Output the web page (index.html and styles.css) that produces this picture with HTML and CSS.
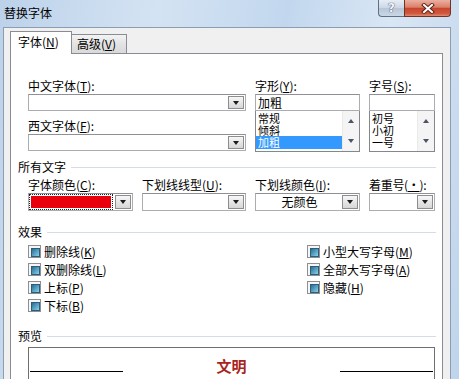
FILE: index.html
```html
<!DOCTYPE html>
<html lang="zh-CN">
<head>
    <meta charset="UTF-8">
    <meta name="viewport" content="width=device-width, initial-scale=1.0">
    <title>替换字体</title>
    <link rel="stylesheet" href="styles.css">
</head>
<body>
<div class="window">
    <!-- 标题栏 -->
    <div class="titlebar">
        <div class="title">替换字体</div>
        <div class="caption">
            <div class="cap-btn help">?</div>
            <div class="cap-btn close">
                <svg width="14" height="11" viewBox="0 0 14 11">
                    <path d="M3 2 L11 9 M11 2 L3 9" stroke="#5b2418" stroke-width="4" stroke-linecap="square"/>
                    <path d="M3 2 L11 9 M11 2 L3 9" stroke="#ffffff" stroke-width="2" stroke-linecap="square"/>
                </svg>
            </div>
        </div>
    </div>

    <div class="client">
        <div class="tabs">
            <div class="tab active">字体(<u>N</u>)</div>
            <div class="tab">高级(<u>V</u>)</div>
        </div>

        <div class="panel">
            <!-- 字体 / 字形 / 字号 -->
            <div class="font-grid">
                <div class="col">
                    <div class="field-label">中文字体(<u>T</u>):</div>
                    <div class="combo"><span class="combo-text"></span><span class="drop"></span></div>
                    <div class="field-label second">西文字体(<u>F</u>):</div>
                    <div class="combo"><span class="combo-text"></span><span class="drop"></span></div>
                </div>
                <div class="col">
                    <div class="field-label">字形(<u>Y</u>):</div>
                    <div class="textbox">加粗</div>
                    <div class="listbox">
                        <ul class="items">
                            <li>常规</li>
                            <li>倾斜</li>
                            <li class="selected">加粗</li>
                        </ul>
                        <div class="vscroll"><span class="sbtn"><i class="arrow up"></i></span><span class="sbtn"><i class="arrow down"></i></span></div>
                    </div>
                </div>
                <div class="col">
                    <div class="field-label">字号(<u>S</u>):</div>
                    <div class="textbox"></div>
                    <div class="listbox">
                        <ul class="items">
                            <li>初号</li>
                            <li>小初</li>
                            <li>一号</li>
                        </ul>
                        <div class="vscroll"><span class="sbtn"><i class="arrow up"></i></span><span class="sbtn"><i class="arrow down"></i></span></div>
                    </div>
                </div>
            </div>

            <!-- 所有文字 -->
            <div class="group">所有文字</div>
            <div class="attr-grid">
                <div class="col">
                    <div class="field-label">字体颜色(<u>C</u>):</div>
                    <div class="combo tall">
                        <span class="swatch-wrap"><span class="swatch"></span></span><span class="drop"></span>
                    </div>
                </div>
                <div class="col">
                    <div class="field-label">下划线线型(<u>U</u>):</div>
                    <div class="combo tall"><span class="combo-text"></span><span class="drop"></span></div>
                </div>
                <div class="col">
                    <div class="field-label">下划线颜色(<u>I</u>):</div>
                    <div class="combo tall"><span class="combo-text center">无颜色</span><span class="drop"></span></div>
                </div>
                <div class="col">
                    <div class="field-label clip">着重号(<u>·</u>):</div>
                    <div class="combo tall"><span class="combo-text"></span><span class="drop"></span></div>
                </div>
            </div>

            <!-- 效果 -->
            <div class="group effects-head">效果</div>
            <div class="effects">
                <div class="check-col left">
                    <div class="check"><span class="box"></span>删除线(<u>K</u>)</div>
                    <div class="check"><span class="box"></span>双删除线(<u>L</u>)</div>
                    <div class="check"><span class="box"></span>上标(<u>P</u>)</div>
                    <div class="check"><span class="box"></span>下标(<u>B</u>)</div>
                </div>
                <div class="check-col">
                    <div class="check"><span class="box"></span>小型大写字母(<u>M</u>)</div>
                    <div class="check"><span class="box"></span>全部大写字母(<u>A</u>)</div>
                    <div class="check"><span class="box"></span>隐藏(<u>H</u>)</div>
                </div>
            </div>

            <!-- 预览 -->
            <div class="group preview-head">预览</div>
            <div class="preview">
                <span class="rule"></span>
                <span class="sample">文明</span>
                <span class="rule"></span>
            </div>
        </div>
    </div>
</div>
</body>
</html>
```

FILE: styles.css
```css
/* 基本样式重置 */
* {
    margin: 0;
    padding: 0;
    box-sizing: border-box;
}

body {
    width: 459px;
    height: 379px;
    overflow: hidden;
    font-family: "Noto Sans CJK SC", sans-serif;
    font-size: 12px;
    color: #000;
    background: #c4d8ee;
}

u {
    text-decoration: underline;
    text-underline-offset: 1px;
}

/* 窗口外框 */
.window {
    height: 379px;
    display: flex;
    flex-direction: column;
    background: linear-gradient(100deg, #bcd2ea 0%, #d4e3f3 30%, #c2d7ee 55%, #d9e6f4 75%, #bfd4eb 100%);
}

/* 标题栏 */
.titlebar {
    height: 27px;
    flex: none;
    display: flex;
    justify-content: space-between;
    align-items: flex-start;
}

.title {
    padding: 4px 0 0 4px;
    line-height: 17px;
    font-size: 12px;
}

.caption {
    display: flex;
    margin-right: 8px;
}

.cap-btn {
    height: 17px;
    border: 1px solid #5f6f86;
    border-top: none;
    display: flex;
    align-items: center;
    justify-content: center;
}

.help {
    width: 26px;
    border-right: none;
    border-radius: 0 0 0 4px;
    background: linear-gradient(#e6edf5, #cdd8e5 48%, #b7c6d8 52%, #cad7e6);
    font-family: "DejaVu Sans", sans-serif;
    font-weight: bold;
    font-size: 12px;
    color: #f4f6fa;
    text-shadow: 0 0 1px #3b4a60, 0 0 1px #3b4a60;
}

.close {
    width: 47px;
    border-color: #6e3427;
    border-radius: 0 0 4px 0;
    background: linear-gradient(#eab0a2, #dc7f69 45%, #c8452d 52%, #d05a3f 85%, #e28b73);
}

/* 客户区 */
.client {
    flex: 1;
    margin: 0 8px 0 3px;
    background: #f0f0f0;
    border: 1px solid #8c9db2;
    border-bottom: none;
    padding: 3px 0 0 6px;
}

/* 选项卡 */
.tabs {
    height: 22px;
    display: flex;
    align-items: flex-end;
}

.tab {
    height: 19px;
    width: 55px;
    border: 1px solid #898c95;
    border-left: none;
    border-bottom: none;
    background: linear-gradient(#f3f3f3, #e3e3e3 50%, #d9d9d9);
    line-height: 18px;
    padding-left: 5px;
}

.tab.active {
    position: relative;
    z-index: 1;
    height: 23px;
    width: 62px;
    margin-bottom: -1px;
    border-left: 1px solid #898c95;
    background: #fff;
    line-height: 20px;
    padding-left: 7px;
}

.panel {
    width: 433px;
    height: 330px;
    background: #fff;
    border: 1px solid #898c95;
    padding: 23px 6px 0 7px;
}

/* 字段 */
.field-label {
    line-height: 17px;
    white-space: nowrap;
}

.field-label.second {
    margin-top: 6px;
}

.field-label.clip {
    overflow: hidden;
    letter-spacing: -0.3px;
}

.font-grid {
    margin-left: 10px;
    display: grid;
    grid-template-columns: 218px 105px 66px;
    column-gap: 9px;
}

.col {
    display: flex;
    flex-direction: column;
}

.combo {
    height: 17px;
    border: 1px solid #abadb3;
    border-top-color: #8e9096;
    background: #fff;
    display: flex;
}

.combo.tall {
    height: 18px;
}

.combo-text {
    flex: 1;
    line-height: 15px;
    padding-left: 2px;
}

.combo-text.center {
    text-align: center;
}

.drop {
    width: 16px;
    margin: 1px;
    border: 1px solid #8d8d8d;
    background: linear-gradient(#f7f7f7, #e6e6e6 50%, #d6d6d6);
    display: flex;
    align-items: center;
    justify-content: center;
}

.drop::after {
    content: '';
    border-left: 3px solid transparent;
    border-right: 3px solid transparent;
    border-top: 4px solid #1b1b1b;
}

.swatch-wrap {
    flex: 1;
    border: 1px dotted #222;
    padding: 1px;
    margin: 0 1px 0 0;
}

.swatch {
    display: block;
    height: 100%;
    background: #e8000c;
}

.textbox {
    height: 17px;
    border: 1px solid #abadb3;
    border-top-color: #8e9096;
    line-height: 15px;
    padding-left: 2px;
}

/* 列表框 */
.listbox {
    height: 41px;
    border: 1px solid #828790;
    border-top: none;
    display: flex;
    overflow: hidden;
}

.items {
    flex: 1;
    list-style: none;
    padding-top: 1px;
    font-size: 11px;
}

.items li {
    line-height: 12px;
    height: 12px;
    padding-left: 2px;
}

.items li.selected {
    background: #3399ff;
    color: #fff;
    height: 13px;
}

.vscroll {
    width: 17px;
    background: #f4f4f4;
    border-left: 1px solid #eaeaea;
    display: flex;
    flex-direction: column;
}

.sbtn {
    flex: 1;
    display: flex;
    align-items: center;
    justify-content: center;
}

.arrow {
    border-left: 3px solid transparent;
    border-right: 3px solid transparent;
}

.arrow.up {
    border-bottom: 4px solid #4a5468;
}

.arrow.down {
    border-top: 4px solid #4a5468;
}

/* 分组标题 */
.group {
    display: flex;
    align-items: center;
    line-height: 16px;
    margin-top: 7px;
}

.group::after {
    content: '';
    flex: 1;
    height: 1px;
    margin-left: 5px;
    background: #d5dce3;
}

.attr-grid {
    margin-left: 10px;
    margin-top: 1px;
    display: grid;
    grid-template-columns: 105px 104px 105px 66px;
    column-gap: 9px;
}

.effects-head {
    margin-top: 13px;
}

/* 效果复选框 */
.effects {
    margin: 2px 0 0 10px;
    display: flex;
}

.check-col.left {
    width: 279px;
}

.check {
    height: 18px;
    display: flex;
    align-items: center;
    white-space: nowrap;
}

.box {
    width: 13px;
    height: 13px;
    margin-right: 3px;
    border: 1px solid #8f8f8f;
    background: #f6f6f6;
    padding: 2px;
}

.box::after {
    content: '';
    display: block;
    width: 100%;
    height: 100%;
    border: 1px solid #2c5d7a;
    background: linear-gradient(135deg, #2b6d90, #5fa9c9 60%, #8fd0e6);
}

/* 预览 */
.preview-head {
    margin-top: 14px;
}

.preview {
    margin: 3px 0 0 10px;
    width: 407px;
    height: 40px;
    border: 1px solid #6f6f6f;
    padding: 9px 1px 0;
    display: grid;
    grid-template-columns: 93px 1fr 93px;
    align-items: start;
}

.rule {
    height: 1px;
    margin-top: 14px;
    background: #000;
}

.sample {
    text-align: center;
    font-size: 15px;
    font-weight: bold;
    line-height: 18px;
    color: #a8241d;
}
```
